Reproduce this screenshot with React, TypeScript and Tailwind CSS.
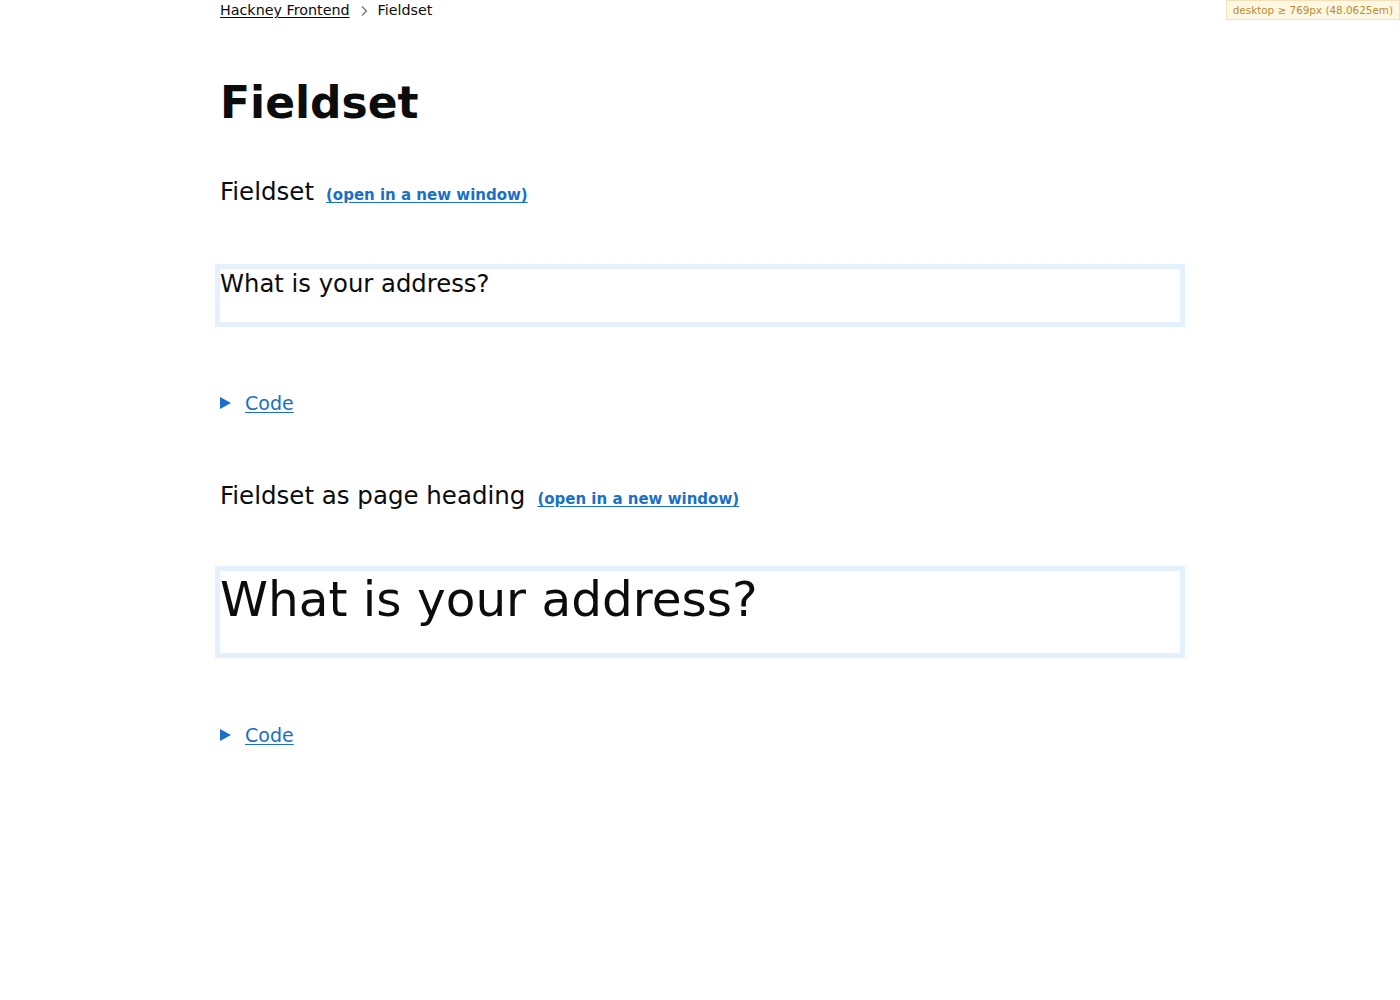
import React from 'react';

const font = { fontFamily: '"DejaVu Sans", "Open Sans", sans-serif' };

function Example({ title, big }: { title: string; big?: boolean }) {
  return (
    <section>
      <h2 className="flex items-baseline gap-3 text-[24.5px] leading-[30px] text-[#0b0c0c]">
        {title}
        <a href="#" className="text-[15px] font-bold text-[#1a6fc6] underline underline-offset-2">
          (open in a new window)
        </a>
      </h2>
      <div className={big ? 'mt-[52px]' : 'mt-[54px]'}>
        <div
          className={`-mx-[5px] border-[5px] border-[#e3f0fd] ${big ? 'h-[92px]' : 'h-[63px]'}`}
        >
          <p className={big ? 'text-[48.5px] leading-[56px] text-[#0b0c0c]' : 'text-[24.3px] leading-[30px] text-[#0b0c0c]'}>
            What is your address?
          </p>
        </div>
      </div>
      <details className={big ? 'mt-[65px]' : 'mt-[64px]'}>
        <summary className="flex list-none items-center gap-[14px] text-[19px] leading-6 text-[#1a6fc6]">
          <span className="block h-0 w-0 border-y-[6px] border-l-[11px] border-y-transparent border-l-[#1a6fc6]" />
          <span className="underline underline-offset-2">Code</span>
        </summary>
      </details>
    </section>
  );
}

export default function App() {
  return (
    <div className="relative min-h-[1000px] bg-white" style={font}>
      <div className="absolute right-0 top-0 border border-[#f5e1b8] bg-[#fcf8e3] px-[6px] py-[1px] text-[10.4px] leading-4 text-[#c08a2f]">
        desktop ≥ 769px (48.0625em)
      </div>

      <div className="ml-[220px] w-[960px]">
        <nav className="flex h-[22px] items-center gap-[10px] text-[14.3px] text-[#0b0c0c]">
          <a href="#" className="underline underline-offset-2">Hackney Frontend</a>
          <svg width="8" height="12" viewBox="0 0 8 12" fill="none" stroke="#6f777b" strokeWidth="1.3">
            <path d="M2 1.5 6.5 6 2 10.5" />
          </svg>
          <span>Fieldset</span>
        </nav>

        <h1 className="mt-[52px] text-[44px] font-bold leading-[58px] text-[#0b0c0c]">Fieldset</h1>

        <div className="mt-[45px]">
          <Example title="Fieldset" />
        </div>
        <div className="mt-[66px]">
          <Example title="Fieldset as page heading" big />
        </div>
      </div>
    </div>
  );
}
